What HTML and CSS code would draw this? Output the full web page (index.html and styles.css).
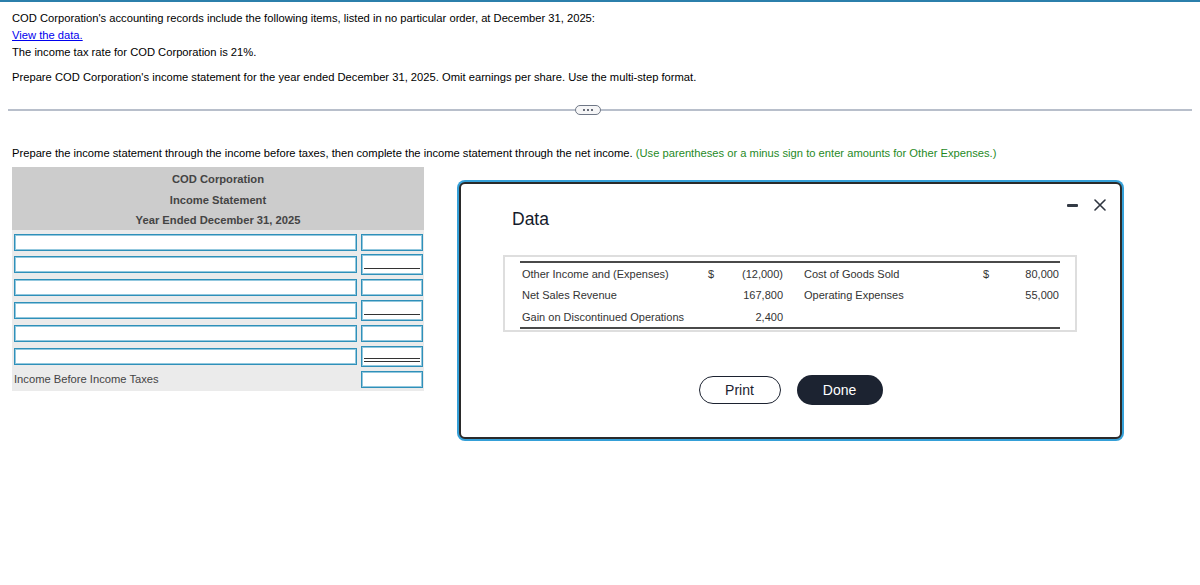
FILE: index.html
```html
<!DOCTYPE html>
<html lang="en">
<head>
<meta charset="utf-8">
<title>Income Statement</title>
<link rel="stylesheet" href="styles.css">
</head>
<body>
<div class="page">
  <div class="intro">
    <p class="line">COD Corporation's accounting records include the following items, listed in no particular order, at December 31, 2025:</p>
    <p class="line"><a class="link" href="#">View the data.</a></p>
    <p class="line">The income tax rate for COD Corporation is 21%.</p>
    <p class="line gap">Prepare COD Corporation's income statement for the year ended December 31, 2025. Omit earnings per share. Use the multi-step format.</p>
  </div>

  <div class="divider">
    <span class="rule rule-left"></span>
    <span class="pill"><i></i><i></i><i></i></span>
    <span class="rule rule-right"></span>
  </div>

  <p class="instruction">Prepare the income statement through the income before taxes, then complete the income statement through the net income. <span class="hint">(Use parentheses or a minus sign to enter amounts for Other Expenses.)</span></p>

  <div class="statement">
    <div class="st-head">
      <div>COD Corporation</div>
      <div>Income Statement</div>
      <div>Year Ended December 31, 2025</div>
    </div>
    <div class="st-body">
      <div class="st-row"><div class="field wide"></div><div class="field amt"></div></div>
      <div class="st-row"><div class="field wide"></div><div class="field amt tall"><span class="uline"></span></div></div>
      <div class="st-row"><div class="field wide"></div><div class="field amt"></div></div>
      <div class="st-row"><div class="field wide"></div><div class="field amt tall"><span class="uline"></span></div></div>
      <div class="st-row"><div class="field wide"></div><div class="field amt"></div></div>
      <div class="st-row"><div class="field wide"></div><div class="field amt tall"><span class="uline double"></span></div></div>
      <div class="st-row"><div class="st-label">Income Before Income Taxes</div><div class="field amt"></div></div>
    </div>
  </div>
</div>

<div class="modal">
  <div class="modal-head">
    <h2 class="modal-title">Data</h2>
    <div class="controls">
      <span class="minimize"></span>
      <svg class="close" width="12" height="12" viewBox="0 0 12 12"><path d="M1 1 L11 11 M11 1 L1 11" stroke="#2f3540" stroke-width="1.6" fill="none" stroke-linecap="round"/></svg>
    </div>
  </div>
  <div class="data-box">
    <table class="data">
      <colgroup>
        <col class="c1"><col class="c2"><col class="c3"><col class="c4"><col class="c5"><col class="c6">
      </colgroup>
      <tr><td class="lbl">Other Income and (Expenses)</td><td class="cur">$</td><td class="num">(12,000)</td><td class="lbl2">Cost of Goods Sold</td><td class="cur">$</td><td class="num">80,000</td></tr>
      <tr><td class="lbl">Net Sales Revenue</td><td class="cur"></td><td class="num">167,800</td><td class="lbl2">Operating Expenses</td><td class="cur"></td><td class="num">55,000</td></tr>
      <tr><td class="lbl">Gain on Discontinued Operations</td><td class="cur"></td><td class="num">2,400</td><td class="lbl2"></td><td class="cur"></td><td class="num"></td></tr>
    </table>
  </div>
  <div class="buttons">
    <button class="btn print">Print</button>
    <button class="btn done">Done</button>
  </div>
</div>
</body>
</html>
```
FILE: styles.css
```css
* { box-sizing: border-box; }
html, body { margin: 0; padding: 0; }
body {
  font-family: "Liberation Sans", Arial, Helvetica, sans-serif;
  font-size: 11.2px;
  color: #000;
  background: #fff;
  width: 1200px;
  height: 585px;
  overflow: hidden;
  position: relative;
}
.page { border-top: 2px solid #2b7fab; }
.intro { padding: 8px 12px 0; }
.line { margin: 0; line-height: 17px; }
.line.gap { margin-top: 8px; }
.link { color: #0000ee; text-decoration: underline; }

.divider {
  display: flex;
  align-items: center;
  margin: 19px 8px 0;
  height: 10px;
}
.rule { height: 2px; background: #b8bfcb; }
.rule-left { width: 567px; }
.rule-right { flex: 1; }
.pill {
  width: 26px;
  height: 10px;
  border: 1px solid #6f7786;
  border-radius: 5px;
  background: #f6f6f7;
  display: flex;
  align-items: center;
  justify-content: center;
  gap: 2px;
}
.pill i { width: 2px; height: 2px; background: #3a4150; border-radius: 1px; display: block; }

.instruction {
  margin: 30px 0 0 12px;
  line-height: 17px;
}
.hint { color: #1f8a1f; }

.statement { margin: 5px 0 0 12px; width: 412px; }
.st-head {
  background: #cccccc;
  height: 63px;
  padding-top: 2px;
  text-align: center;
  font-weight: bold;
  color: #444;
  font-size: 11.2px;
  line-height: 20.5px;
}
.st-body { background: #ebebeb; padding: 0 1px 0 2px; }
.st-row {
  display: grid;
  grid-template-columns: 343px 62px;
  column-gap: 4px;
  height: 23px;
  align-items: center;
}
.st-row:first-child { padding-top: 1px; }
.field {
  height: 17px;
  background: #fff;
  border: 1px solid #2f90b9;
  box-shadow: inset 0 0 0 1px #93c8de;
  position: relative;
}
.field.tall { height: 21px; }
.uline {
  position: absolute;
  left: 2px;
  right: 2px;
  bottom: 5px;
  height: 1px;
  background: #333;
}
.uline.double {
  height: 4px;
  background: transparent;
  border-top: 1px solid #333;
  border-bottom: 1px solid #333;
  bottom: 4px;
}
.st-label { color: #444; line-height: 17px; }

.modal {
  position: absolute;
  left: 459px;
  top: 182px;
  width: 663px;
  height: 257px;
  background: #fff;
  border: 2px solid #2a2a2a;
  border-radius: 6px;
  box-shadow: 0 0 0 2px #35a0d8;
}
.modal-head {
  display: flex;
  justify-content: space-between;
  align-items: flex-start;
  padding: 14px 14px 0 51px;
}
.modal-title {
  margin: 10px 0 0;
  font-size: 17.5px;
  font-weight: normal;
  line-height: 22px;
  color: #131a2a;
}
.controls { display: flex; align-items: center; gap: 16px; height: 14px; }
.minimize { width: 11px; height: 3px; background: #333a45; border-radius: 1px; display: block; }
.close { display: block; }

.data-box {
  margin: 25px 43px 0 42px;
  border: 2px solid #dedede;
  padding: 4px 15px 1px;
}
.data {
  width: 100%;
  border-collapse: collapse;
  border-top: 2px solid #4a4a4a;
  border-bottom: 2px solid #4a4a4a;
  font-size: 11px;
  color: #333;
  table-layout: fixed;
}
.data td { padding: 0; height: 22px; white-space: nowrap; }
.c1 { width: 180px; }
.c2 { width: 22px; }
.c3 { width: 62px; }
.c4 { width: 191px; }
.c5 { width: 20px; }
.c6 { width: 65px; }
.lbl { padding-left: 2px !important; }
.lbl2 { padding-left: 20px !important; }
.cur { padding-left: 8px !important; }
.num { text-align: right; padding-right: 1px !important; }

.buttons {
  display: flex;
  justify-content: center;
  align-items: center;
  gap: 16px;
  margin-top: 43px;
}
.btn {
  font-family: "Liberation Sans", Arial, Helvetica, sans-serif;
  font-size: 14px;
  border-radius: 15px;
  cursor: pointer;
}
.print {
  width: 82px;
  height: 28px;
  background: #fff;
  color: #1c2230;
  border: 1.5px solid #1c2230;
}
.done {
  width: 86px;
  height: 30px;
  background: #1c2331;
  color: #fff;
  border: none;
}
```
